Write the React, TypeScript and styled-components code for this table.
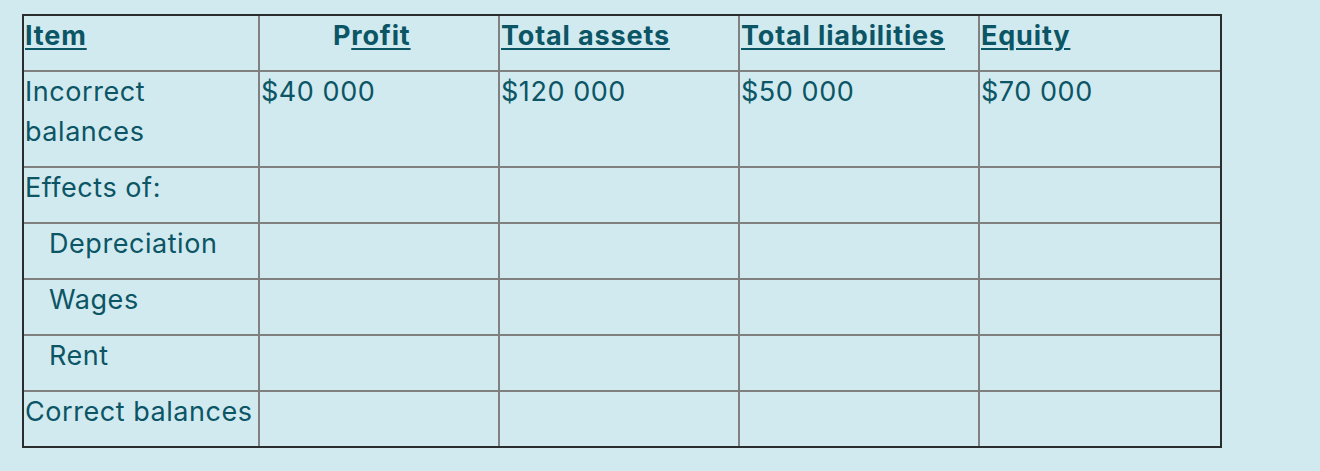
import React from "react";
import styled, { createGlobalStyle } from "styled-components";

const GlobalStyle = createGlobalStyle`
  html, body {
    margin: 0;
    padding: 0;
    background: #d1eaf0;
  }
  body {
    font-family: Inter, "Noto Sans", "Liberation Sans", sans-serif;
    color: #0b5565;
  }
`;

const Page = styled.div`
  min-height: 471px;
  padding: 14px 0 0 22px;
  box-sizing: border-box;
  background: #d1eaf0;
`;

const Table = styled.table`
  border-collapse: separate;
  border-spacing: 0;
  border: 2px solid #2a2d2e;
  width: 1200px;
  box-sizing: border-box;
  table-layout: fixed;
  font-size: 27px;
  letter-spacing: 0.55px;
  line-height: 40px;
  color: #0b5565;
`;

const Cell = styled.td<{ $indent?: boolean; $w?: number }>`
  box-sizing: border-box;
  width: ${(p) => (p.$w ? `${p.$w}px` : "auto")};
  vertical-align: top;
  padding: 0 1px 14px ${(p) => (p.$indent ? "25px" : "1px")};
  border-right: 2px solid #808080;
  border-bottom: 2px solid #808080;
  font-weight: 400;
  text-align: left;
  &:last-child {
    border-right: none;
  }
  tbody tr:last-child > & {
    border-bottom: none;
  }
`;

const Head = styled(Cell).attrs({ as: "th" })<{ $center?: boolean }>`
  font-weight: 700;
  letter-spacing: 0.85px;
  text-align: ${(p) => (p.$center ? "center" : "left")};
`;

const U = styled.u`
  text-decoration: underline;
  text-decoration-thickness: 2px;
  text-underline-offset: 3px;
`;

const rows: { label: string; indent?: boolean; values: string[] }[] = [
  { label: "Incorrect balances", values: ["$40 000", "$120 000", "$50 000", "$70 000"] },
  { label: "Effects of:", values: ["", "", "", ""] },
  { label: "Depreciation", indent: true, values: ["", "", "", ""] },
  { label: "Wages", indent: true, values: ["", "", "", ""] },
  { label: "Rent", indent: true, values: ["", "", "", ""] },
  { label: "Correct balances", values: ["", "", "", ""] },
];

export default function App() {
  return (
    <>
      <GlobalStyle />
      <Page>
        <Table>
          <thead>
            <tr>
              <Head $w={236}>
                <U>Item</U>
              </Head>
              <Head $w={240} $center>
                P<U>rofit</U>
                {"\u00a0\u00a0"}
              </Head>
              <Head $w={240}>
                <U>Total assets</U>
              </Head>
              <Head $w={240}>
                <U>Total liabilities</U>
              </Head>
              <Head>
                <U>Equity</U>
              </Head>
            </tr>
          </thead>
          <tbody>
            {rows.map((r) => (
              <tr key={r.label}>
                <Cell $indent={r.indent}>{r.label}</Cell>
                {r.values.map((v, i) => (
                  <Cell key={i}>{v}</Cell>
                ))}
              </tr>
            ))}
          </tbody>
        </Table>
      </Page>
    </>
  );
}
